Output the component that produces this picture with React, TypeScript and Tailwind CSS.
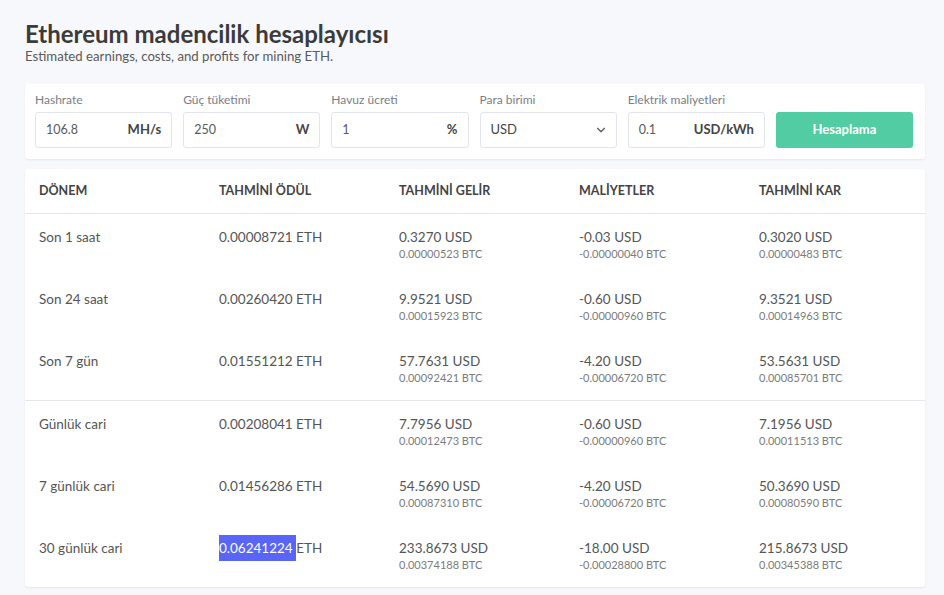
import { ChevronDown } from "lucide-react";

type Row = {
  period: string;
  reward: string;
  revenue: [string, string];
  cost: [string, string];
  profit: [string, string];
  selected?: boolean;
};

const recent: Row[] = [
  { period: "Son 1 saat", reward: "0.00008721 ETH", revenue: ["0.3270 USD", "0.00000523 BTC"], cost: ["-0.03 USD", "-0.00000040 BTC"], profit: ["0.3020 USD", "0.00000483 BTC"] },
  { period: "Son 24 saat", reward: "0.00260420 ETH", revenue: ["9.9521 USD", "0.00015923 BTC"], cost: ["-0.60 USD", "-0.00000960 BTC"], profit: ["9.3521 USD", "0.00014963 BTC"] },
  { period: "Son 7 gün", reward: "0.01551212 ETH", revenue: ["57.7631 USD", "0.00092421 BTC"], cost: ["-4.20 USD", "-0.00006720 BTC"], profit: ["53.5631 USD", "0.00085701 BTC"] },
];

const current: Row[] = [
  { period: "Günlük cari", reward: "0.00208041 ETH", revenue: ["7.7956 USD", "0.00012473 BTC"], cost: ["-0.60 USD", "-0.00000960 BTC"], profit: ["7.1956 USD", "0.00011513 BTC"] },
  { period: "7 günlük cari", reward: "0.01456286 ETH", revenue: ["54.5690 USD", "0.00087310 BTC"], cost: ["-4.20 USD", "-0.00006720 BTC"], profit: ["50.3690 USD", "0.00080590 BTC"] },
  { period: "30 günlük cari", reward: "0.06241224 ETH", revenue: ["233.8673 USD", "0.00374188 BTC"], cost: ["-18.00 USD", "-0.00028800 BTC"], profit: ["215.8673 USD", "0.00345388 BTC"], selected: true },
];

const Field = ({ label, value, unit }: { label: string; value: string; unit: string }) => (
  <div className="flex flex-col">
    <label className="text-[12px] leading-4 text-[#7a7d88] mb-1">{label}</label>
    <div className="h-9 border border-[#e1e3ef] rounded-[3px] flex items-center justify-between px-[10px]">
      <span className="text-[12.5px] text-[#5a5a5a]">{value}</span>
      <span className="text-[13px] font-bold text-[#444]">{unit}</span>
    </div>
  </div>
);

const Money = ({ v }: { v: [string, string] }) => (
  <div>
    <div className="text-[13.5px] leading-[26px] text-[#555]">{v[0]}</div>
    <div className="text-[11px] leading-[14px] -mt-[3px] text-[#7b7b7b]">{v[1]}</div>
  </div>
);

const TableRow = ({ row }: { row: Row }) => (
  <div className="grid grid-cols-[180px_180px_180px_180px_1fr] px-[14px] pt-[10px] h-[62px]">
    <div className="text-[13.5px] leading-[26px] text-[#555]">{row.period}</div>
    <div className="text-[13.5px] leading-[26px] text-[#555]">
      {row.selected ? (
        <>
          <span className="inline-block bg-[#5865f7] text-white">{row.reward.split(" ")[0]}&nbsp;</span>
          ETH
        </>
      ) : (
        row.reward
      )}
    </div>
    <Money v={row.revenue} />
    <Money v={row.cost} />
    <Money v={row.profit} />
  </div>
);

export default function App() {
  return (
    <div className="min-h-[595px] bg-[#f7f8fc] pl-[25px] pr-[19px] pt-[20px] font-['Lato',sans-serif]">
      <h1 className="text-[24px] leading-[28px] font-bold text-[#3b3b3b]">Ethereum madencilik hesaplayıcısı</h1>
      <p className="text-[13.2px] leading-4 text-[#5a5a5a]">Estimated earnings, costs, and profits for mining ETH.</p>

      <div className="mt-[20px] bg-white rounded-[3px] shadow-[0_1px_2px_rgba(30,40,90,0.08)] pl-[10px] pr-[12px] pt-2 pb-[11px] grid grid-cols-6 gap-[11px]">
        <Field label="Hashrate" value="106.8" unit="MH/s" />
        <Field label="Güç tüketimi" value="250" unit="W" />
        <Field label="Havuz ücreti" value="1" unit="%" />
        <div className="flex flex-col">
          <label className="text-[12px] leading-4 text-[#7a7d88] mb-1">Para birimi</label>
          <div className="h-9 border border-[#e1e3ef] rounded-[3px] flex items-center justify-between pl-[10px] pr-[8px]">
            <span className="text-[13px] text-[#444]">USD</span>
            <ChevronDown size={14} strokeWidth={2} className="text-[#555]" />
          </div>
        </div>
        <Field label="Elektrik maliyetleri" value="0.1" unit="USD/kWh" />
        <div className="flex flex-col justify-end">
          <button className="h-9 rounded-[3px] bg-[#52cca3] text-white text-[13px] font-bold">Hesaplama</button>
        </div>
      </div>

      <div className="mt-[10px] bg-white rounded-[3px] shadow-[0_1px_2px_rgba(30,40,90,0.08)]">
        <div className="grid grid-cols-[180px_180px_180px_180px_1fr] px-[14px] h-[45px] items-center border-b border-[#e4e6f2] text-[12.5px] font-bold text-[#444] uppercase">
          <div>DÖNEM</div>
          <div>TAHMİNİ ÖDÜL</div>
          <div>TAHMİNİ GELİR</div>
          <div>MALİYETLER</div>
          <div>TAHMİNİ KAR</div>
        </div>
        {recent.map((r) => (
          <TableRow key={r.period} row={r} />
        ))}
        <div className="border-t border-[#e4e6f2]">
          {current.map((r) => (
            <TableRow key={r.period} row={r} />
          ))}
        </div>
      </div>
    </div>
  );
}
